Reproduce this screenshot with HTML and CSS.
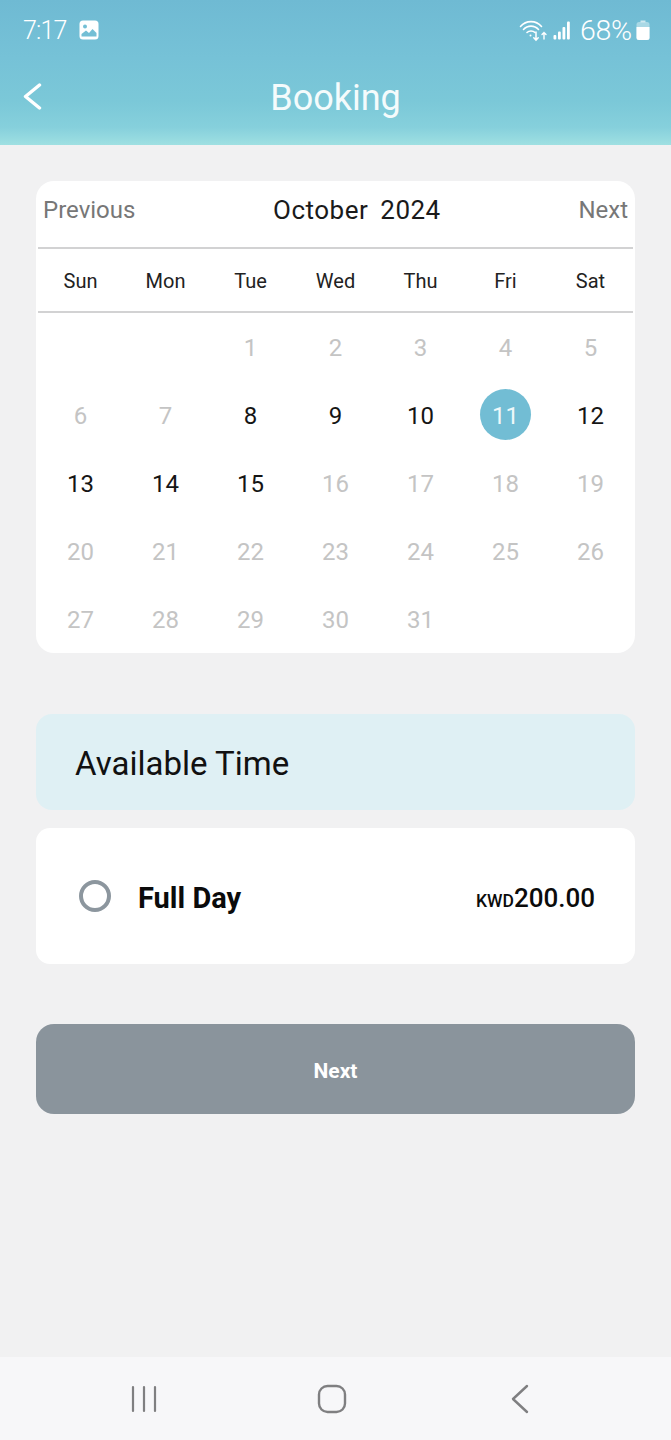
FILE: index.html
```html
<!DOCTYPE html>
<html lang="en">
<head>
<meta charset="utf-8">
<title>Booking</title>
<link rel="stylesheet" href="styles.css">
</head>
<body>
<div class="app">
  <header class="top">
    <div class="status">
      <div class="status-left">
        <span class="clock">7:17</span>
        <svg class="pic" width="20" height="20" viewBox="0 0 20 20"><rect x="0.5" y="0.5" width="19" height="19" rx="3.5" fill="#fff"/><circle cx="6" cy="6.5" r="2" fill="#74bfd5"/><path d="M2.5 16.5v-2.5l4.5-3.5 3 2.5 3.5-4 4 4v3.5z" fill="#74bfd5"/></svg>
      </div>
      <div class="status-right">
        <svg class="wifi" width="30" height="24" viewBox="0 0 30 24" fill="none" stroke="#fff" stroke-linecap="round"><path d="M1.5 8.500C7 2 17 2 22.500 8.500" stroke-width="1.600"/><path d="M4.500 11.500C8.500 7 15.500 7 19.500 11.500" stroke-width="1.600"/><path d="M8 14.500C10 12.500 14 12.500 16 14.500" stroke-width="1.600"/><circle cx="11.500" cy="17.500" r="1" fill="#fff" stroke="none"/><path d="M17 14v8M14.800 19.800l2.200 2.400 2.200-2.400" stroke-width="1.500"/><path d="M25 21v-6.500M23 16.500l2-2 2 2" stroke-width="1.400"/></svg>
        <svg class="signal" width="18" height="20" viewBox="0 0 18 20" fill="#fff"><rect x="0.500" y="15" width="2.800" height="4.500" rx="1"/><rect x="5" y="11.500" width="2.800" height="8" rx="1"/><rect x="9.500" y="7" width="2.800" height="12.500" rx="1"/><rect x="14" y="1.500" width="2.800" height="18" rx="1"/></svg>
        <span class="pct">68%</span>
        <svg class="batt" width="14" height="20" viewBox="0 0 14 20"><path d="M4.500 0.500h5v2h-5z" fill="#cfe9f0"/><rect x="0.500" y="2" width="13" height="18" rx="2.500" fill="#cfe9f0" opacity="0.6"/><path d="M0.500 7h13v10.500a2.500 2.500 0 0 1-2.500 2.500h-8a2.500 2.500 0 0 1-2.500-2.500z" fill="#fff"/></svg>
      </div>
    </div>
    <div class="titlebar">
      <svg class="back" width="20" height="27" viewBox="0 0 20 27" fill="none" stroke="#fff" stroke-width="3.400" stroke-linecap="round" stroke-linejoin="round"><path d="M17.500 2L3.500 13.500 17.500 25"/></svg>
      <h1 class="title">Booking</h1>
    </div>
  </header>

  <main class="content">
    <section class="calendar">
      <div class="cal-head">
        <span class="cal-nav">Previous</span>
        <span class="cal-month">October&nbsp;2024</span>
        <span class="cal-nav">Next</span>
      </div>
      <div class="weekdays">
        <span>Sun</span><span>Mon</span><span>Tue</span><span>Wed</span><span>Thu</span><span>Fri</span><span>Sat</span>
      </div>
      <div class="days">
        <span></span><span></span><span class="off">1</span><span class="off">2</span><span class="off">3</span><span class="off">4</span><span class="off">5</span>
        <span class="off">6</span><span class="off">7</span><span>8</span><span>9</span><span>10</span><span class="sel"><b>11</b></span><span>12</span>
        <span>13</span><span>14</span><span>15</span><span class="off">16</span><span class="off">17</span><span class="off">18</span><span class="off">19</span>
        <span class="off">20</span><span class="off">21</span><span class="off">22</span><span class="off">23</span><span class="off">24</span><span class="off">25</span><span class="off">26</span>
        <span class="off">27</span><span class="off">28</span><span class="off">29</span><span class="off">30</span><span class="off">31</span><span></span><span></span>
      </div>
    </section>

    <div class="avail">Available Time</div>

    <div class="slot">
      <span class="radio"></span>
      <span class="slot-name">Full Day</span>
      <span class="price"><small>KWD</small>200.00</span>
    </div>

    <button class="next" type="button">Next</button>
  </main>

  <nav class="sysnav">
    <svg width="28" height="28" viewBox="0 0 28 28" fill="none" stroke="#7f7f81" stroke-width="2.200" stroke-linecap="round"><path d="M3 2v24M14 2v24M25 2v24"/></svg>
    <svg class="home" width="30" height="30" viewBox="0 0 30 30" fill="none" stroke="#7f7f81" stroke-width="2.400"><rect x="2" y="2" width="26" height="26" rx="8.500"/></svg>
    <svg width="18" height="30" viewBox="0 0 18 30" fill="none" stroke="#7f7f81" stroke-width="2.400" stroke-linecap="round" stroke-linejoin="round"><path d="M16 2L2 15l14 13"/></svg>
  </nav>
</div>
</body>
</html>
```

FILE: styles.css
```css
* { box-sizing: border-box; }
html, body { margin: 0; padding: 0; }
body { font-family: Roboto, "Liberation Sans", sans-serif; background: #f1f1f2; }
.app { width: 671px; height: 1440px; display: flex; flex-direction: column; overflow: hidden; }

.top { height: 145px; flex: none; color: #fff; padding: 0 21px 0 23px;
  background: linear-gradient(180deg, #6fbad3 0%, #76c2d7 40%, #7bc8d8 70%, #86d0dc 88%, #9fe0e2 100%); }
.status { height: 60px; display: flex; justify-content: space-between; align-items: center; }
.status-left, .status-right { display: flex; align-items: center; }
.status-left { gap: 12px; }
.clock { font-size: 25px; font-weight: 300; letter-spacing: -0.8px; }
.status-right { gap: 3px; }
.wifi { margin-right: 1px; }
.pct { font-size: 28.5px; font-weight: 300; margin-left: 6px; letter-spacing: -0.2px; }
.batt { margin-left: 1px; }
.titlebar { position: relative; height: 74px; display: flex; align-items: center; justify-content: center; padding-top: 2px; margin-left: -2px; }
.back { position: absolute; left: 1px; top: 23px; }
.title { margin: 0; font-size: 36px; font-weight: 400; color: #f4fbfc; }

.content { flex: 1; padding: 36px 36px 0; }
.calendar { height: 472px; background: #fff; border-radius: 18px; padding: 0 2px; }
.cal-head { height: 68px; display: flex; justify-content: space-between; align-items: center; padding: 0 5px 8px 5px; border-bottom: 2px solid #d2d2d3; }
.cal-nav { font-size: 24px; color: #777; }
.cal-month { font-size: 26px; color: #1a1a1a; letter-spacing: 0.5px; word-spacing: 5px; }
.weekdays { height: 64px; display: grid; grid-template-columns: repeat(7, 1fr); align-items: center; text-align: center; padding-top: 2px; font-size: 20px; color: #222; border-bottom: 2px solid #d2d2d3; }
.days { display: grid; grid-template-columns: repeat(7, 1fr); grid-auto-rows: 68px; align-items: center; justify-items: center; font-size: 24px; color: #151515; }
.days span { padding-top: 2px; }
.days .off { color: #c4c4c4; }
.days .sel { padding: 0 0 2px; }
.sel b { display: flex; width: 51px; height: 51px; padding-top: 4px; border-radius: 50%; align-items: center; justify-content: center; background: #72bdd4; color: #eef8fa; font-weight: 400; }

.avail { height: 96px; margin-top: 61px; padding: 2px 0 0 39px; background: #dff0f4; border-radius: 16px; display: flex; align-items: center; font-size: 33px; color: #111; }
.slot { height: 136px; margin-top: 18px; background: #fff; border-radius: 14px; display: flex; align-items: center; padding: 0 40px 0 43px; }
.radio { width: 32px; height: 32px; border: 4px solid #8c969e; border-radius: 50%; flex: none; }
.slot-name { font-size: 29px; font-weight: 700; margin-left: 27px; padding-top: 4px; color: #0b0b0b; }
.price { margin-left: auto; padding-top: 4px; font-size: 26px; font-weight: 500; color: #0b0b0b; }
.price small { font-size: 17.5px; font-weight: 500; }
.next { display: block; width: 100%; height: 90px; padding-top: 4px; margin-top: 60px; border: 0; border-radius: 18px; background: #8a949c; color: #fff; font: 700 21px Roboto, sans-serif; }

.sysnav { height: 83px; flex: none; background: #f7f7f9; display: flex; align-items: center; justify-content: space-between; padding: 0 142px 0 130px; }
.home { margin-right: 5px; }
```
